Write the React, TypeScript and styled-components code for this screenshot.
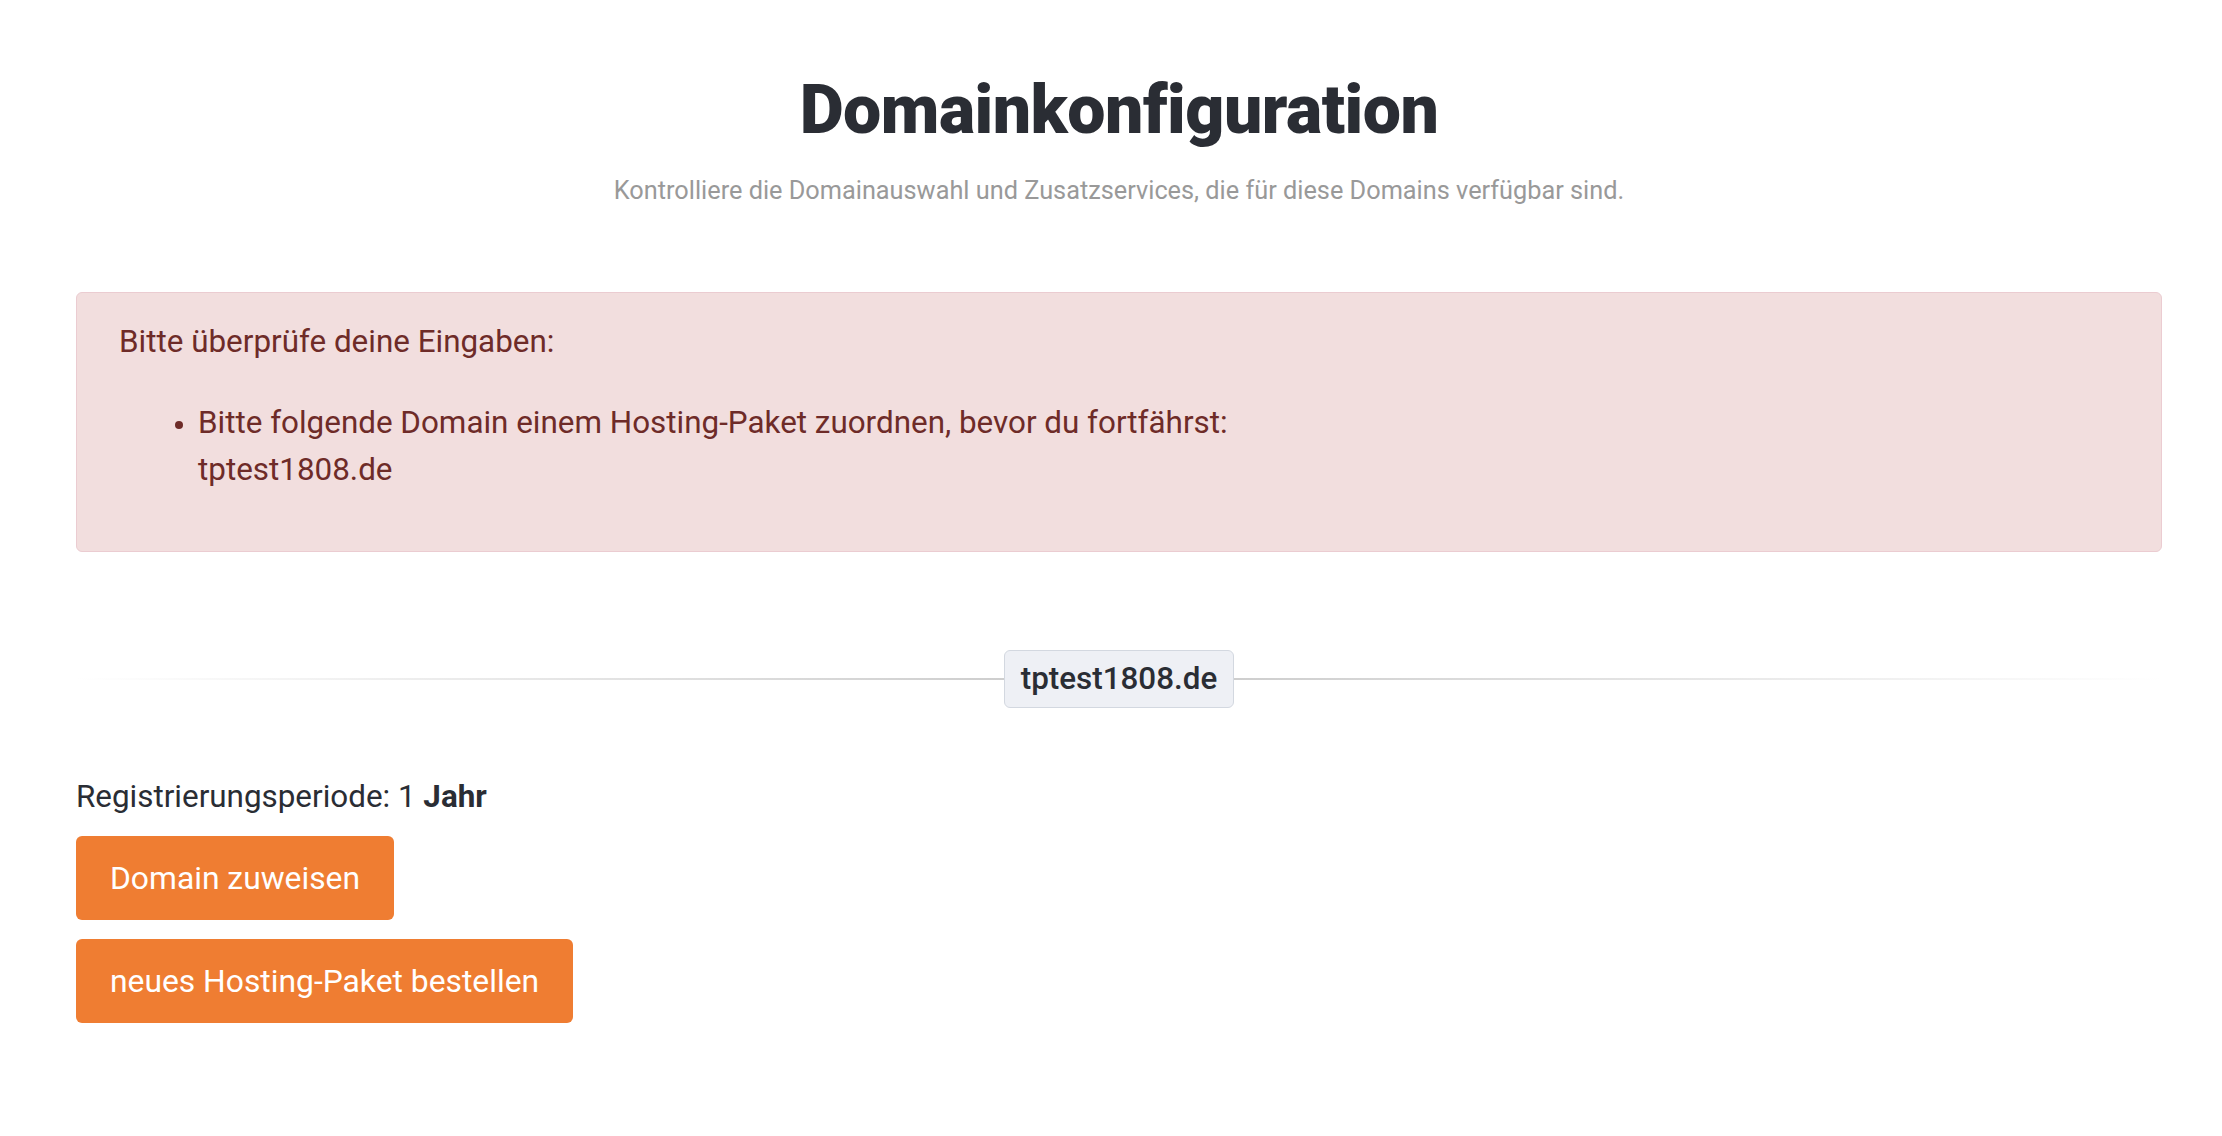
import React from "react";
import styled, { createGlobalStyle } from "styled-components";

const GlobalStyle = createGlobalStyle`
  html, body {
    margin: 0;
    padding: 0;
    background: #ffffff;
  }
  body {
    font-family: Roboto, "Liberation Sans", Arial, sans-serif;
    color: #2a2d34;
  }
  * { box-sizing: border-box; }
`;

const Page = styled.main`
  padding: 74px 60px 40px 76px;
`;

const Header = styled.header`
  display: flex;
  flex-direction: column;
  align-items: center;
  gap: 27px;
`;

const Title = styled.h1`
  margin: 0;
  font-size: 68px;
  line-height: 72px;
  font-weight: 900;
  color: #2a2d34;
  letter-spacing: -0.5px;
`;

const Subtitle = styled.p`
  margin: 0;
  font-size: 25.3px;
  line-height: 36px;
  color: #999999;
`;

const Alert = styled.div`
  margin-top: 83px;
  background: #f2dede;
  border: 1px solid #ebccd1;
  border-radius: 6px;
  padding: 25px 42px 32px;
  color: #6e2b28;
  font-size: 31.4px;
  line-height: 47px;
`;

const AlertHeading = styled.p`
  margin: 0 0 34px;
`;

const AlertList = styled.ul`
  margin: 0 0 26px;
  padding-left: 79px;
  li::marker {
    font-size: 26px;
  }
`;

const DividerRow = styled.div`
  margin-top: 98px;
  display: flex;
  align-items: center;
  justify-content: center;
  position: relative;
  &::before {
    content: "";
    position: absolute;
    left: 0;
    right: 0;
    top: 50%;
    height: 2px;
    margin-top: -1px;
    background: linear-gradient(to right, rgba(204,204,204,0), #c8c8c8 50%, rgba(204,204,204,0));
  }
`;

const DomainBadge = styled.span`
  position: relative;
  z-index: 1;
  background: #eef0f5;
  border: 1px solid #d3d8e0;
  border-radius: 6px;
  padding: 7px 16px;
  font-size: 31.4px;
  line-height: 42px;
  font-weight: 500;
  color: #2a2d34;
`;

const Details = styled.section`
  margin-top: 69px;
  display: flex;
  flex-direction: column;
  align-items: flex-start;
  gap: 19px;
`;

const Period = styled.p`
  margin: 0;
  font-size: 31.4px;
  line-height: 40px;
  color: #2a2d34;
  strong { font-weight: 700; }
`;

const Actions = styled.div`
  display: flex;
  flex-direction: column;
  align-items: flex-start;
  gap: 19px;
`;

const OrangeButton = styled.button`
  font-family: inherit;
  font-size: 31.8px;
  line-height: 42px;
  padding: 21px 34px;
  color: #ffffff;
  background: #ef7d32;
  border: none;
  border-radius: 6px;
  cursor: pointer;
`;

export default function App() {
  return (
    <>
      <GlobalStyle />
      <Page>
        <Header>
          <Title>Domainkonfiguration</Title>
          <Subtitle>
            Kontrolliere die Domainauswahl und Zusatzservices, die für diese Domains verfügbar sind.
          </Subtitle>
        </Header>
        <Alert>
          <AlertHeading>Bitte überprüfe deine Eingaben:</AlertHeading>
          <AlertList>
            <li>
              Bitte folgende Domain einem Hosting-Paket zuordnen, bevor du fortfährst:
              <br />
              tptest1808.de
            </li>
          </AlertList>
        </Alert>
        <DividerRow>
          <DomainBadge>tptest1808.de</DomainBadge>
        </DividerRow>
        <Details>
          <Period>
            Registrierungsperiode: 1 <strong>Jahr</strong>
          </Period>
          <Actions>
            <OrangeButton>Domain zuweisen</OrangeButton>
            <OrangeButton>neues Hosting-Paket bestellen</OrangeButton>
          </Actions>
        </Details>
      </Page>
    </>
  );
}
